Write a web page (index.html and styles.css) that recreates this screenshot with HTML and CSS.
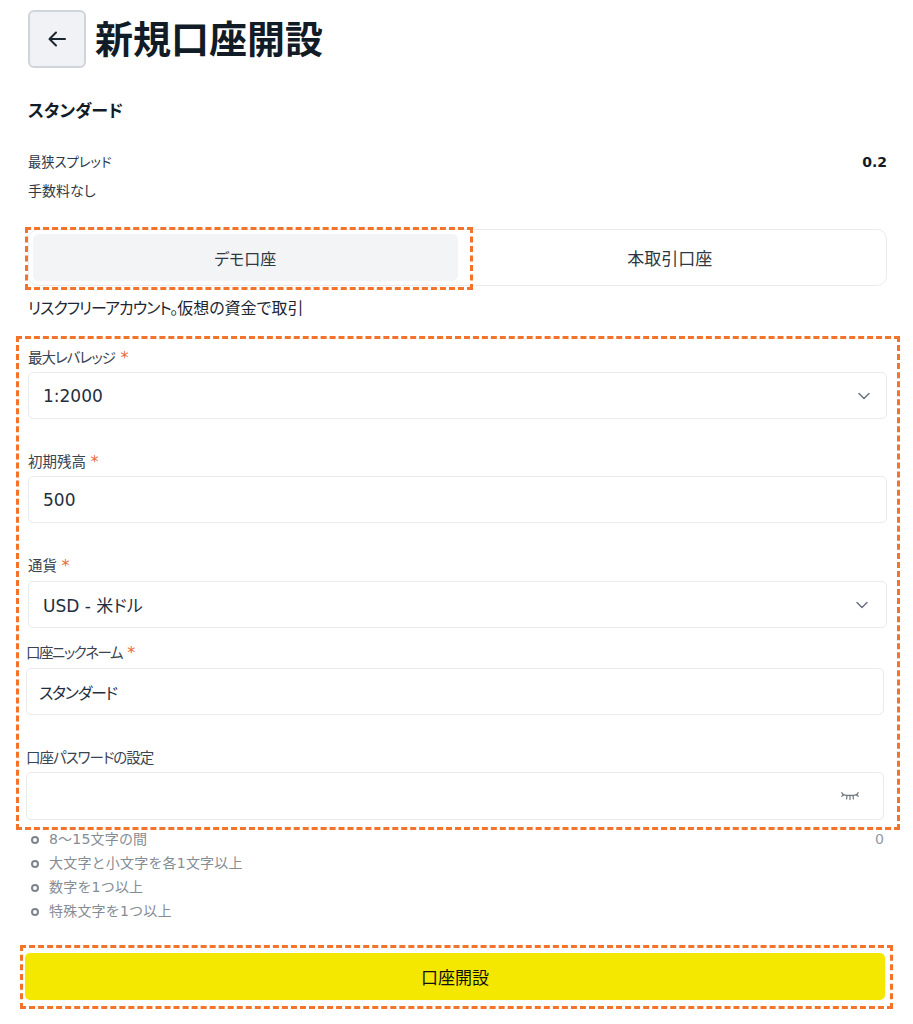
FILE: index.html
```html
<!DOCTYPE html>
<html lang="ja">
<head>
    <meta charset="UTF-8">
    <meta name="viewport" content="width=device-width, initial-scale=1.0">
    <title>新規口座開設</title>
    <link rel="stylesheet" href="styles.css">
</head>
<body>
    <div class="container">
        <div class="title-row">
            <button class="back-btn" aria-label="戻る">
                <svg width="24" height="24" viewBox="0 0 24 24" fill="none" stroke="#1b2530" stroke-width="2" stroke-linecap="round" stroke-linejoin="round"><path d="M20 12H5"/><path d="M11 5.5 4.5 12l6.5 6.5"/></svg>
            </button>
            <h1>新規口座開設</h1>
        </div>

        <h2>スタンダード</h2>

        <div class="spec-row">
            <span>最狭スプレッド</span>
            <strong>0.2</strong>
        </div>
        <div class="spec-row second"><span>手数料なし</span></div>

        <div class="tabs">
            <div class="tab active">デモ口座</div>
            <div class="tab">本取引口座</div>
        </div>
        <p class="tab-note"><span class="tight-note">リスクフリーアカウント。</span>仮想の資金で取引</p>

        <div class="field first">
            <label class="tight">最大レバレッジ <span class="req">*</span></label>
            <div class="input">
                <span>1:2000</span>
                <svg class="chevron" width="14" height="14" viewBox="0 0 14 14" fill="none" stroke="#6b7280" stroke-width="1.5" stroke-linecap="round" stroke-linejoin="round"><path d="M2 4.5 7 9.5l5-5"/></svg>
            </div>
        </div>

        <div class="field">
            <label>初期残高 <span class="req">*</span></label>
            <div class="input"><span>500</span></div>
        </div>

        <div class="field currency">
            <label>通貨 <span class="req">*</span></label>
            <div class="input">
                <span>USD - 米ドル</span>
                <svg class="chevron" width="14" height="14" viewBox="0 0 14 14" fill="none" stroke="#6b7280" stroke-width="1.5" stroke-linecap="round" stroke-linejoin="round"><path d="M2 4.5 7 9.5l5-5"/></svg>
            </div>
        </div>

        <div class="account-fields">
            <div class="field nick">
                <label class="tight">口座ニックネーム <span class="req">*</span></label>
                <div class="input"><span class="tight-value">スタンダード</span></div>
            </div>

            <div class="field">
                <label class="tight">口座パスワードの設定</label>
                <div class="input pass">
                    <span></span>
                    <svg width="18" height="10" viewBox="0 0 18 10" fill="none" stroke="#6f7780" stroke-width="1.2" stroke-linecap="round"><path d="M2 3.6C6 4.6 12 4.6 16 3.6"/><path d="M.8 1.6 2.5 3.8"/><path d="M.8 5.4 2.5 3.8"/><path d="M17.2 1.6 15.5 3.8"/><path d="M17.2 5.4 15.5 3.8"/><path d="M6 4.6 5.6 8"/><path d="M9 4.8 9 8.6"/><path d="M12 4.6 12.4 8"/></svg>
                </div>
            </div>

            <div class="rules">
                <ul>
                    <li>8～15文字の間</li>
                    <li>大文字と小文字を各1文字以上</li>
                    <li>数字を1つ以上</li>
                    <li>特殊文字を1つ以上</li>
                </ul>
                <span class="count">0</span>
            </div>

            <button class="submit">口座開設</button>
        </div>
    </div>

    <!-- annotation boxes drawn over the screenshot -->
    <div class="mark mark-tab"></div>
    <div class="mark mark-form"></div>
    <div class="mark mark-submit"></div>
</body>
</html>
```

FILE: styles.css
```css
* { box-sizing: border-box; }
html, body { height: 1024px; overflow: hidden; }
body { margin: 0; background: #fff; color: #111c27; font-family: "DejaVu Sans", "Noto Sans CJK JP", sans-serif; font-feature-settings: "palt"; position: relative; }
.container { padding: 10px 26px 0 28px; }

.title-row { display: flex; align-items: center; gap: 9px; height: 58px; }
.back-btn { width: 58px; height: 58px; padding: 0; display: flex; align-items: center; justify-content: center; background: #f0f2f5; border: 2px solid #d0d5dc; border-radius: 6px; }
h1 { margin: 2px 0 0; font-size: 38px; font-weight: 700; line-height: 58px; color: #111c27; }
h2 { margin: 31px 0 0; font-size: 17px; font-weight: 700; line-height: 24px; }

.spec-row { display: flex; justify-content: space-between; align-items: center; margin-top: 26px; height: 24px; font-size: 13.3px; color: #2e3844; }
.spec-row strong { margin-top: 2px; font-size: 14px; font-weight: 700; color: #111c27; }
.spec-row.second { margin-top: 5px; font-size: 14px; }

.tabs { display: flex; margin-top: 27px; height: 57px; padding: 4px; border: 1px solid #e9ebee; border-radius: 10px; }
.tab { flex: 1; display: flex; align-items: center; justify-content: center; font-size: 17px; color: #2e3844; border-radius: 6px; }
.tab.active { background: #f3f4f6; font-size: 16px; }
.tab-note { margin: 11px 0 0; font-size: 16px; line-height: 24px; color: #1d2732; }
.tight-note { letter-spacing: -1.05px; }

.field { margin-top: 33px; }
.field.first { margin-top: 27px; }
.field.currency label { margin-bottom: 5px; }
.field label { display: block; height: 20px; margin-bottom: 4px; font-size: 14.5px; line-height: 20px; color: #3a4450; }
.field label.tight { letter-spacing: -1px; }
.field.nick label.tight { letter-spacing: -1.5px; }
.req { color: #e8693a; font-size: 16px; letter-spacing: 0; }
.tight .req { margin-left: 2px; }
.input { display: flex; align-items: center; justify-content: space-between; height: 47px; padding: 0 14px; background: #fff; border: 1px solid #e8eaed; border-radius: 5px; font-size: 17px; color: #1f2f40; }
.chevron { margin-right: 1px; }
.currency .chevron { margin-right: 3px; }

.account-fields { margin-left: -2px; margin-right: 3px; }
.field.nick { margin-top: 15px; }
.nick label { margin-bottom: 5px; }
.nick .input { padding-left: 12px; }
.tight-value { font-size: 16px; letter-spacing: -1.3px; }
.input.pass { height: 48px; padding-right: 24px; padding-left: 12px; }

.rules { display: flex; justify-content: space-between; margin-top: 8px; font-size: 14px; color: #858c94; font-feature-settings: normal; }
.rules ul { margin: 0; padding: 0 0 0 23px; list-style: none; }
.rules li { position: relative; height: 24px; line-height: 23px; letter-spacing: 0.2px; }
.rules li::before { content: ""; box-sizing: border-box; position: absolute; left: -18px; top: 8px; width: 8px; height: 8px; border: 2px solid #7d848b; border-radius: 50%; }
.count { color: #8f9aa6; line-height: 23px; }

.submit { display: block; width: calc(100% + 2px); height: 47px; margin-top: 29px; margin-left: -1px; border: none; border-radius: 5px; background: #f4e800; color: #111; font-family: inherit; font-feature-settings: inherit; font-size: 17px; }

.mark { position: absolute; border: 3px dashed #f4732a; }
.mark-tab { left: 25px; top: 227px; width: 448px; height: 63px; }
.mark-form { left: 16px; top: 336px; width: 884px; height: 494px; }
.mark-submit { left: 20px; top: 945px; width: 873px; height: 64px; }
```
